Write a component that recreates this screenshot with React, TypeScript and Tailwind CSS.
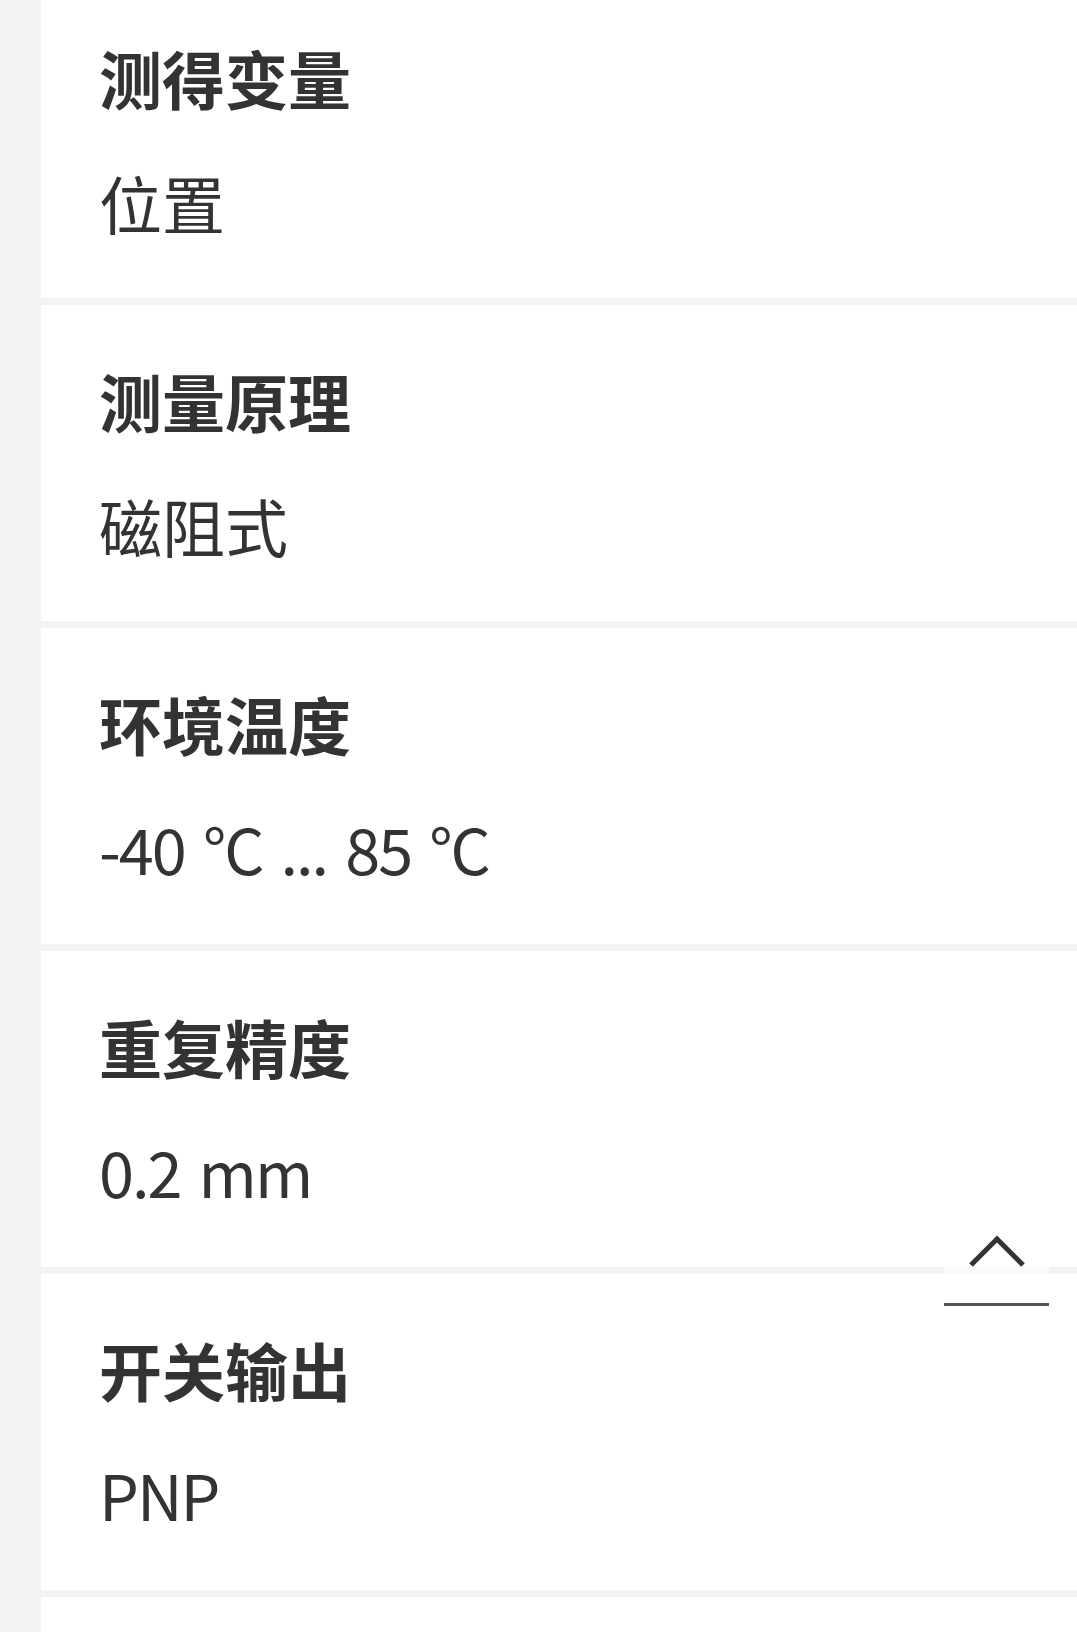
import React from 'react';

const specs = [
  { label: '测得变量', value: '位置', latin: false },
  { label: '测量原理', value: '磁阻式', latin: false },
  { label: '环境温度', value: '-40 °C ... 85 °C', latin: true },
  { label: '重复精度', value: '0.2 mm', latin: true },
  { label: '开关输出', value: 'PNP', latin: true },
];

function SpecCard({ label, value, latin }: { label: string; value: string; latin: boolean }) {
  return (
    <div className="bg-white pl-[58px] pt-[63px] pb-[65px]">
      <h3 className="text-[63px] leading-[63px] font-bold text-[#333333]">{label}</h3>
      <p
        className={
          latin
            ? 'mt-[62px] text-[63px] leading-[63px] font-normal text-[#333333] tracking-[-2px] [word-spacing:6px]'
            : 'mt-[62px] text-[63px] leading-[63px] font-normal text-[#333333]'
        }
      >
        {value}
      </p>
    </div>
  );
}

export default function App() {
  return (
    <div
      className="min-h-screen overflow-hidden bg-[#f2f3f4] pl-[41px]"
      style={{ fontFamily: '"Noto Sans CJK SC", sans-serif' }}
    >
      <div className="-mt-[18px] flex flex-col gap-[7px]">
        {specs.map((s) => (
          <SpecCard key={s.label} label={s.label} value={s.value} latin={s.latin} />
        ))}
        {/* next card, scrolled below the fold */}
        <div className="h-[316px] bg-white" />
      </div>

      {/* back to top */}
      <button
        aria-label="回到顶部"
        className="fixed bottom-[326px] right-[28px] flex h-[96px] w-[105px] justify-center border-b-[3px] border-[#555555] bg-white/60 pt-[24px]"
      >
        <svg width="58" height="34" viewBox="0 0 58 34" fill="none">
          <path d="M3 31 L29 5 L55 31" stroke="#333333" strokeWidth="5" />
        </svg>
      </button>
    </div>
  );
}
